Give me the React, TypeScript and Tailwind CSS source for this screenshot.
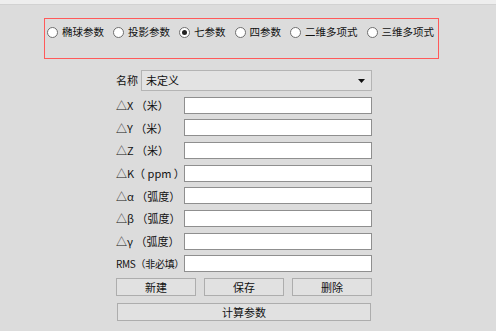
import React from "react";

const radios = [
  { label: "椭球参数", checked: false },
  { label: "投影参数", checked: false },
  { label: "七参数", checked: true },
  { label: "四参数", checked: false },
  { label: "二维多项式", checked: false },
  { label: "三维多项式", checked: false },
];

const fields = [
  "△X （米）",
  "△Y （米）",
  "△Z （米）",
  "△K（ ppm ）",
  "△α （弧度）",
  "△β （弧度）",
  "△γ （弧度）",
  "RMS（非必填）",
];

function Radio({ label, checked }: { label: string; checked: boolean }) {
  return (
    <div className="flex items-center gap-[4px] shrink-0">
      <span className="shrink-0 w-[11px] h-[11px] rounded-full border border-[#6f6f6f] bg-white flex items-center justify-center">
        {checked && <span className="w-[5px] h-[5px] rounded-full bg-[#222]" />}
      </span>
      <span className="text-[10.5px] leading-[12px] text-[#111] whitespace-nowrap">{label}</span>
    </div>
  );
}

function Button({ children, className }: { children: React.ReactNode; className: string }) {
  return (
    <div
      className={`h-[18px] bg-[#e1e1e1] border border-[#adadad] flex items-center justify-center text-[11px] text-[#111] ${className}`}
    >
      {children}
    </div>
  );
}

export default function App() {
  return (
    <div
      className="w-[496px] h-[331px] bg-[#dcdcdc] flex flex-col overflow-hidden"
      style={{ fontFamily: '"Noto Sans CJK SC", "Noto Sans", sans-serif' }}
    >
      <div className="h-[5px] bg-[#eeeeee] border-b border-[#d2d2d2]" />
      <div className="mt-[13px] ml-[44px] w-[395px] h-[41px] border border-[#ff5a5a] flex items-start gap-[9px] pl-[2px] pt-[7px]">
        {radios.map((r) => (
          <Radio key={r.label} label={r.label} checked={r.checked} />
        ))}
      </div>

      <div className="ml-[116px] mt-[11px] w-[256px] flex flex-col">
        <div className="flex items-center h-[21px]">
          <span className="text-[11px] w-[25px] text-[#111]">名称</span>
          <div className="flex-1 h-[21px] bg-[#e3e3e3] border border-[#b4b4b4] flex items-center justify-between pl-[4px] pr-[6px]">
            <span className="text-[11px] text-[#111]">未定义</span>
            <svg width="7" height="4" viewBox="0 0 7 4">
              <path d="M0 0 L7 0 L3.5 4 Z" fill="#111" />
            </svg>
          </div>
        </div>

        <div className="mt-[5.7px] flex flex-col gap-[5.65px]">
          {fields.map((f) => (
            <div key={f} className="flex items-center h-[17px]">
              <span
                className={`w-[68px] shrink-0 text-[#111] whitespace-nowrap ${
                  f.startsWith("RMS") ? "text-[10px] tracking-[-0.3px]" : "text-[11px]"
                }`}
              >
                {f}
              </span>
              <div className="flex-1 h-[17px] bg-white border border-[#8f8f8f]" />
            </div>
          ))}
        </div>

        <div className="mt-[6px] flex gap-[8px]">
          <Button className="w-[80px]">新建</Button>
          <Button className="w-[80px]">保存</Button>
          <Button className="w-[80px]">删除</Button>
        </div>
        <Button className="mt-[7px] w-[254px] ml-[1px]">计算参数</Button>
      </div>
    </div>
  );
}
